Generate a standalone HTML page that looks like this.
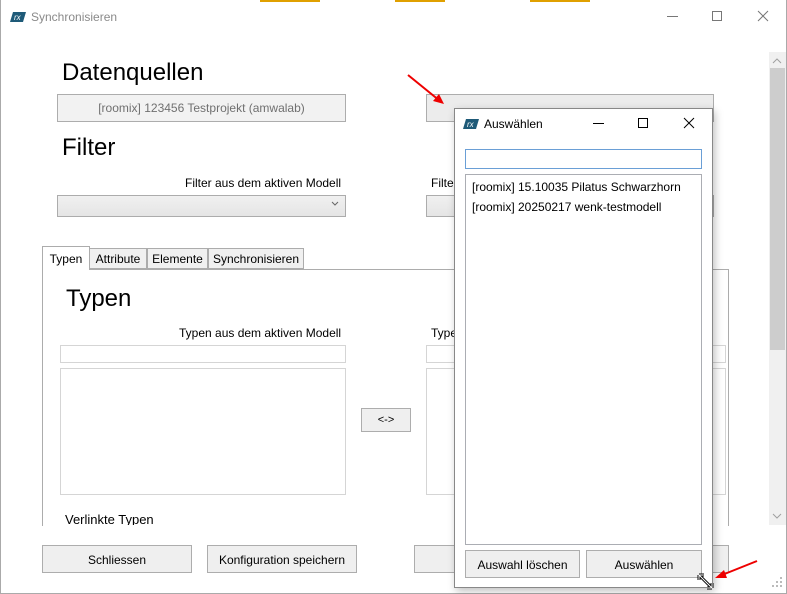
<!DOCTYPE html>
<html><head><meta charset="utf-8"><style>
*{box-sizing:border-box;margin:0;padding:0}
body{width:787px;height:594px;overflow:hidden;background:#fff;font-family:"Liberation Sans",sans-serif;font-size:12px;color:#000;position:relative}
.a{position:absolute}
.btn{position:absolute;border:1px solid #adadad;text-align:center;font-size:12px;background:#efefef}
.h{position:absolute;font-size:24px;color:#000}
.tb{position:absolute;background:#fff;border:1px solid #d5d5d5}
.tab{position:absolute;top:248px;height:21px;border:1px solid #acacac;background:#f0f0f0;font-size:12px;padding-top:3px;text-align:center}
</style></head><body>
<div class="a" style="left:0;top:0;width:787px;height:594px;border:1px solid #aaa;border-top:none"></div>
<div class="a" style="left:260px;top:0;width:60px;height:2px;background:#e0a000"></div>
<div class="a" style="left:395px;top:0;width:50px;height:2px;background:#e0a000"></div>
<div class="a" style="left:530px;top:0;width:60px;height:2px;background:#e0a000"></div>
<svg class="a" style="left:10px;top:11px" width="16" height="12"><path d="M3 1H16L13 11H0Z" fill="#1e5a78"/><text x="4" y="9" font-size="8" fill="#fff" font-style="italic" font-family="Liberation Sans">rx</text></svg>
<div class="a" style="left:31px;top:10px;color:#8a8a8a;font-size:12px">Synchronisieren</div>
<div class="a" style="left:667px;top:16px;width:11px;height:1px;background:#777"></div>
<div class="a" style="left:712px;top:11px;width:10px;height:10px;border:1px solid #777"></div>
<svg class="a" style="left:757px;top:10px" width="12" height="12"><path d="M1 1L11 11M11 1L1 11" stroke="#777"/></svg>
<div class="a" style="left:769px;top:52px;width:17px;height:473px;background:#f0f0f0"></div>
<div class="a" style="left:770px;top:68px;width:15px;height:282px;background:#cdcdcd"></div>
<svg class="a" style="left:772px;top:57px" width="10" height="8"><path d="M1 6L5 2L9 6" stroke="#a0a0a0" fill="none"/></svg>
<svg class="a" style="left:772px;top:512px" width="10" height="8"><path d="M1 2L5 6L9 2" stroke="#a0a0a0" fill="none"/></svg>

<div class="h" style="left:62px;top:59px">Datenquellen</div>
<div class="a" style="left:57px;top:94px;width:289px;height:28px;background:#f2f2f2;border:1px solid #adadad;color:#707070;text-align:center;padding-top:6px">[roomix] 123456 Testprojekt (amwalab)</div>
<div class="a" style="left:426px;top:94px;width:288px;height:28px;background:#ececec;border:1px solid #adadad"></div>
<div class="h" style="left:62px;top:134px">Filter</div>
<div class="a" style="left:185px;top:176px">Filter aus dem aktiven Modell</div>
<div class="a" style="left:57px;top:195px;width:289px;height:22px;background:linear-gradient(#f0f0f0,#e5e5e5);border:1px solid #acacac"></div>
<svg class="a" style="left:331px;top:201px" width="8" height="6"><path d="M1 1L4 4L7 1" stroke="#666" fill="none"/></svg>
<div class="a" style="left:431px;top:176px">Filter</div>
<div class="a" style="left:426px;top:195px;width:288px;height:22px;background:linear-gradient(#f0f0f0,#e5e5e5);border:1px solid #acacac"></div>

<div class="a" style="left:42px;top:269px;width:687px;height:257px;border:1px solid #acacac;border-bottom:none"></div>
<div class="tab" style="left:89px;width:58px">Attribute</div>
<div class="tab" style="left:147px;width:61px">Elemente</div>
<div class="tab" style="left:208px;width:96px">Synchronisieren</div>
<div class="tab" style="left:42px;top:246px;width:48px;height:24px;background:#fff;border-bottom:none;padding-top:5px">Typen</div>
<div class="h" style="left:66px;top:285px">Typen</div>
<div class="a" style="left:179px;top:326px">Typen aus dem aktiven Modell</div>
<div class="tb" style="left:60px;top:345px;width:286px;height:18px"></div>
<div class="tb" style="left:60px;top:368px;width:286px;height:127px"></div>
<div class="a" style="left:431px;top:326px">Typen</div>
<div class="tb" style="left:426px;top:345px;width:300px;height:18px"></div>
<div class="tb" style="left:426px;top:368px;width:300px;height:127px"></div>
<div class="btn" style="left:361px;top:408px;width:50px;height:24px;padding-top:5px;font-size:11px">&lt;-&gt;</div>
<div class="a" style="left:65px;top:512px;font-size:13px;height:13px;overflow:hidden;line-height:16px">Verlinkte Typen</div>
<div class="btn" style="left:42px;top:545px;width:150px;height:28px;padding-top:7px">Schliessen</div>
<div class="btn" style="left:207px;top:545px;width:150px;height:28px;padding-top:7px">Konfiguration speichern</div>
<div class="btn" style="left:414px;top:545px;width:315px;height:28px"></div>
<svg class="a" style="left:770px;top:575px" width="14" height="14"><g fill="#bbb"><rect x="10" y="2" width="2" height="2"/><rect x="6" y="6" width="2" height="2"/><rect x="10" y="6" width="2" height="2"/><rect x="2" y="10" width="2" height="2"/><rect x="6" y="10" width="2" height="2"/><rect x="10" y="10" width="2" height="2"/></g></svg>

<div class="a" style="left:454px;top:108px;width:259px;height:480px;background:#fff;border:1px solid #888;box-shadow:2px 3px 8px rgba(0,0,0,.25)"></div>
<svg class="a" style="left:463px;top:118px" width="16" height="12"><path d="M3 1H16L13 11H0Z" fill="#1e5a78"/><text x="4" y="9" font-size="8" fill="#fff" font-style="italic" font-family="Liberation Sans">rx</text></svg>
<div class="a" style="left:484px;top:117px;font-size:12px">Auswählen</div>
<div class="a" style="left:593px;top:123px;width:11px;height:1px;background:#000"></div>
<div class="a" style="left:638px;top:118px;width:10px;height:10px;border:1px solid #000"></div>
<svg class="a" style="left:683px;top:117px" width="12" height="12"><path d="M1 1L11 11M11 1L1 11" stroke="#000"/></svg>
<div class="a" style="left:465px;top:149px;width:237px;height:20px;border:1px solid #6a9fd6"></div>
<div class="a" style="left:465px;top:174px;width:237px;height:371px;border:1px solid #abadb3"></div>
<div class="a" style="left:472px;top:180px">[roomix] 15.10035 Pilatus Schwarzhorn</div>
<div class="a" style="left:472px;top:200px">[roomix] 20250217 wenk-testmodell</div>
<div class="btn" style="left:465px;top:550px;width:115px;height:28px;padding-top:7px">Auswahl löschen</div>
<div class="btn" style="left:586px;top:550px;width:116px;height:28px;padding-top:7px">Auswählen</div>
<svg class="a" style="left:697px;top:573px" width="20" height="21"><path d="M2 2L15 15M2 2V7M2 2H7M15 15V10M15 15H10" stroke="#000" stroke-width="3" fill="none"/><path d="M2 2L15 15M2 2V7M2 2H7M15 15V10M15 15H10" stroke="#fff" stroke-width="1" fill="none"/></svg>

<svg class="a" style="left:0;top:0" width="787" height="594">
<path d="M408 75L440 101" stroke="#e00" stroke-width="2"/><path d="M444 104L433 101L439 94Z" fill="#e00"/>
<path d="M757 561L722 575" stroke="#e00" stroke-width="2"/><path d="M715 578L724 570L727 578Z" fill="#e00"/>
</svg>
</body></html>
